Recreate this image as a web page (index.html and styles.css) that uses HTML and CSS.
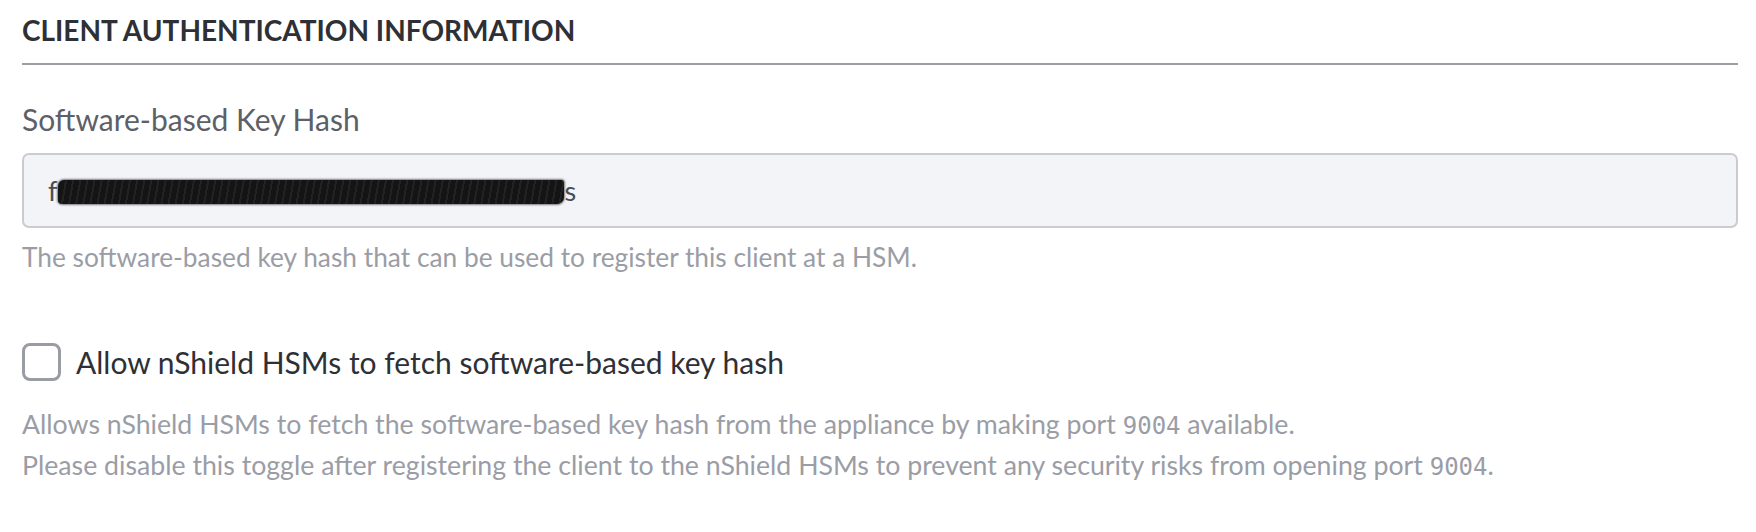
FILE: index.html
```html
<!DOCTYPE html>
<html>
<head>
<meta charset="utf-8">
<link rel="stylesheet" href="styles.css">
</head>
<body>
<section class="section">
  <h2 class="section-title">CLIENT AUTHENTICATION INFORMATION</h2>
  <div class="field">
    <label class="field-label">Software-based Key Hash</label>
    <div class="input"><span class="hash-edge">f</span><span class="redacted" aria-hidden="true"></span><span class="hash-edge">s</span></div>
    <p class="help">The software-based key hash that can be used to register this client at a HSM.</p>
  </div>
  <div class="check-field">
    <label class="check-row"><span class="checkbox"></span><span class="check-label">Allow nShield HSMs to fetch software-based key hash</span></label>
    <p class="help desc">Allows nShield HSMs to fetch the software-based key hash from the appliance by making port <code class="mono">9004</code> available.<br>Please disable this toggle after registering the client to the nShield HSMs to prevent any security risks from opening port <code class="mono">9004</code>.</p>
  </div>
</section>
</body>
</html>
```

FILE: styles.css
```css
* { box-sizing: border-box; }
html, body { margin: 0; background: #ffffff; }
body { font-family: "Lato", "Open Sans", sans-serif; }
.section { padding: 0 18px 0 22px; }
.section-title {
  margin: 0;
  padding-top: 12px;
  font-size: 28px;
  line-height: 36px;
  font-weight: 700;
  color: #2e3035;
  padding-bottom: 15px;
  border-bottom: 2px solid #9c9ea4;
}
.field { padding-top: 36px; }
.field-label {
  display: block;
  font-size: 30px;
  line-height: 36px;
  color: #5d6067;
}
.input {
  margin-top: 16px;
  height: 75px;
  background: #f3f4f8;
  border: 2px solid #cbccd0;
  border-radius: 7px;
  display: flex;
  align-items: center;
  padding-left: 24px;
  font-size: 27px;
  color: #4a4d55;
}
.hash-edge { line-height: 1; }
.redacted {
  display: inline-block;
  width: 506px;
  height: 24px;
  margin: 2px 0 0 1px;
  background:
    repeating-linear-gradient(100deg, rgba(60,60,60,0.35) 0 2px, transparent 2px 7px),
    #141414;
  border-radius: 6px 3px 7px 4px;
  box-shadow: 0 0 2px 1px rgba(0,0,0,0.5);
}
.help {
  margin: 0;
  padding-top: 12px;
  font-size: 26.3px;
  line-height: 34px;
  color: #9a9da6;
}
.check-field { padding-top: 69px; }
.check-row { display: flex; align-items: center; gap: 15px; }
.checkbox {
  width: 39px;
  height: 38px;
  border: 3px solid #9a9ca3;
  border-radius: 8px;
  flex: none;
}
.check-label { font-size: 30px; color: #2e3035; line-height: 38px; }
.desc { padding-top: 24px; font-size: 26.7px; line-height: 39px; }
.mono { font-family: "DejaVu Sans Mono", monospace; font-size: 24px; }
```
